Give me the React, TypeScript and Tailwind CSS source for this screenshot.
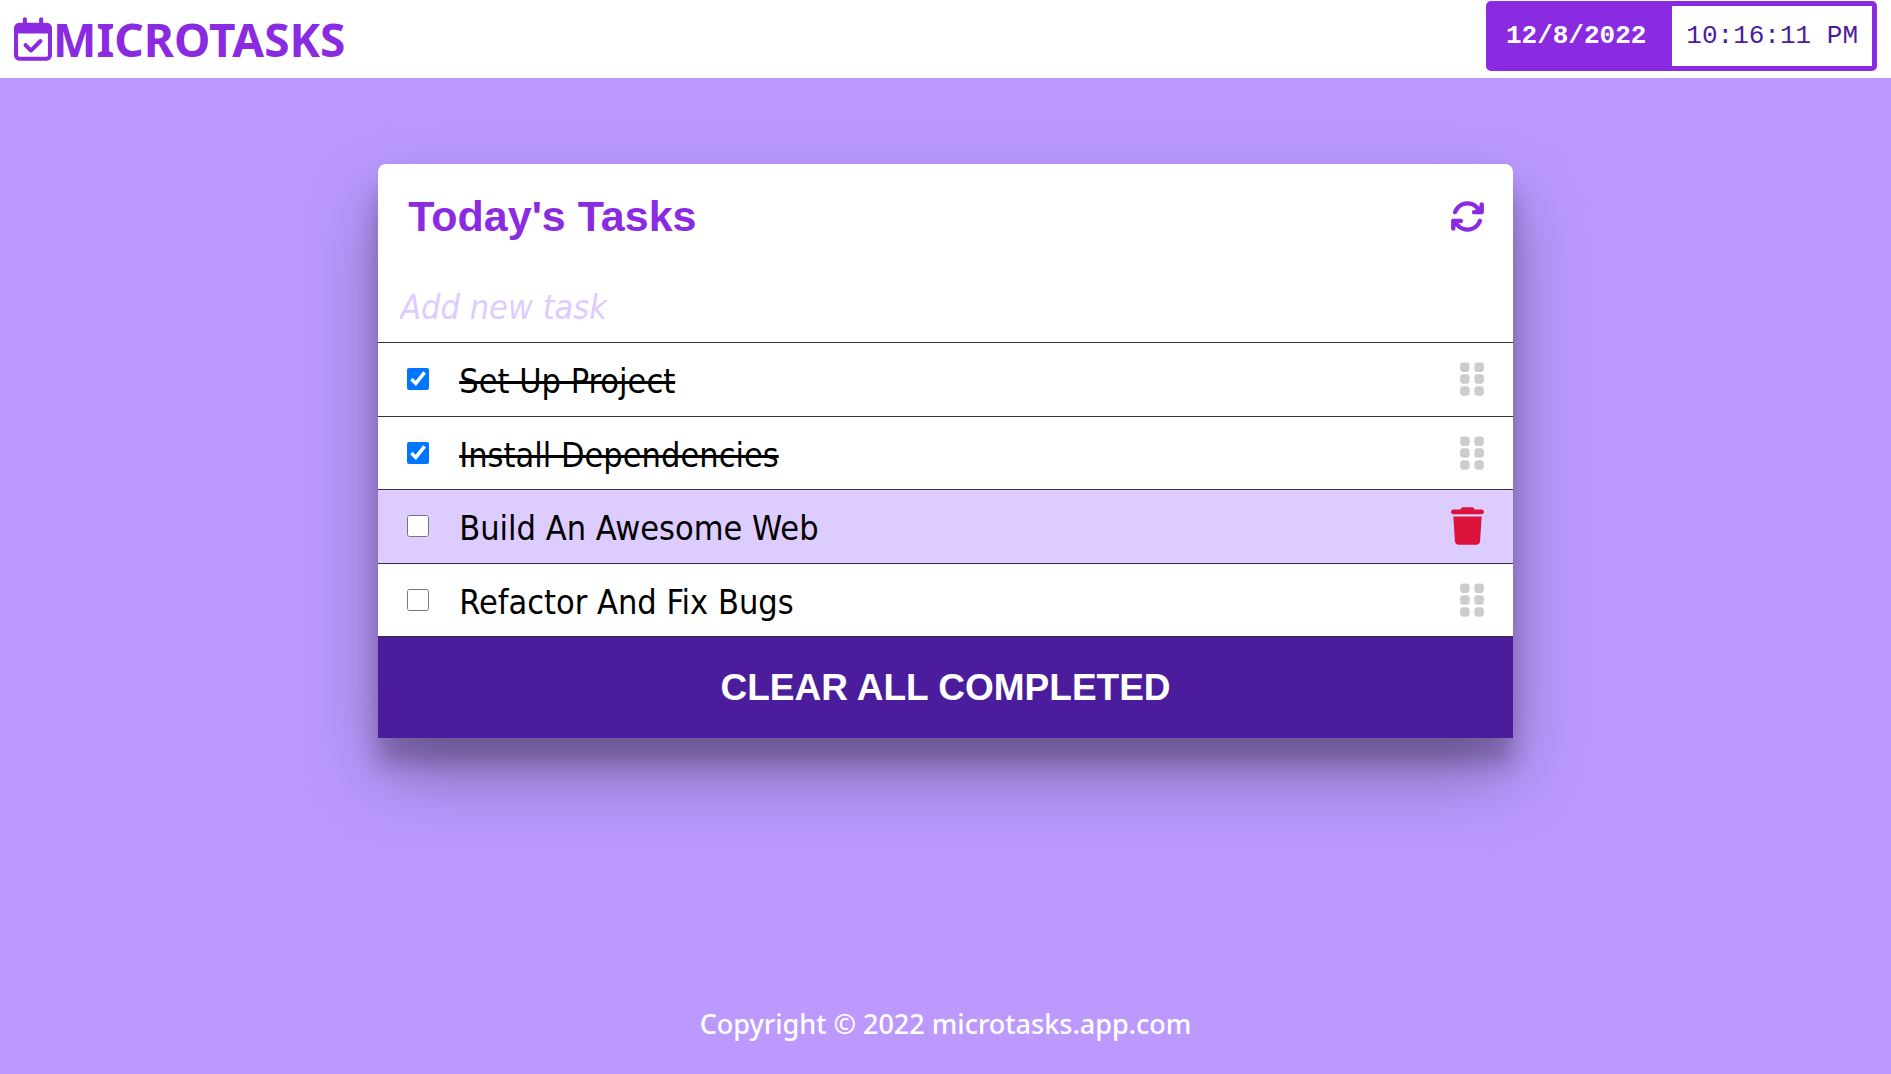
import React, { useState } from "react";
import {
  FaArrowsRotate,
  FaGripVertical,
  FaRegCalendarCheck,
  FaTrash,
} from "react-icons/fa6";

type Task = { id: number; title: string; done: boolean; selected?: boolean };

const initialTasks: Task[] = [
  { id: 1, title: "Set Up Project", done: true },
  { id: 2, title: "Install Dependencies", done: true },
  { id: 3, title: "Build An Awesome Web", done: false, selected: true },
  { id: 4, title: "Refactor And Fix Bugs", done: false },
];

function Header() {
  return (
    <header className="flex h-[78px] items-start justify-between bg-white px-[14px]">
      <div className="flex h-full items-center text-[#8a2be2]">
        <FaRegCalendarCheck className="h-[44px] w-[38px]" aria-hidden="true" />
        <h1 className="pl-px font-['Noto_Sans',sans-serif] text-[46px] leading-none font-bold">
          MICROTASKS
        </h1>
      </div>
      <div className="mt-px flex h-[70px] rounded-[5px] border-[5px] border-[#8a2be2] bg-[#8a2be2] font-['Liberation_Mono',monospace] text-[26px]">
        <span className="flex items-center pr-[26px] pl-[15px] font-bold text-white">
          12/8/2022
        </span>
        <time className="flex items-center bg-white px-[14px] text-[#4b1d9d]">
          10:16:11 PM
        </time>
      </div>
    </header>
  );
}

function TaskRow({ task, onToggle }: { task: Task; onToggle: () => void }) {
  const inputId = `task-${task.id}`;
  return (
    <li
      className={`flex items-center border-b border-[#333333] pr-[29px] pl-[29px] ${
        task.selected ? "bg-[#ddccff]" : "bg-white"
      }`}
    >
      <input
        id={inputId}
        type="checkbox"
        checked={task.done}
        onChange={onToggle}
        className="size-[22px] accent-[#0075ff]"
      />
      <label
        htmlFor={inputId}
        className={`ml-[30px] flex-1 pt-1 font-['DejaVu_Sans_Condensed',sans-serif] text-[34px] leading-none text-black ${
          task.done ? "line-through decoration-[3px]" : ""
        }`}
      >
        {task.title}
      </label>
      {task.selected ? (
        <button type="button" aria-label="Delete task" className="text-[#dc143c]">
          <FaTrash className="h-[38px] w-[33px]" />
        </button>
      ) : (
        <button type="button" aria-label="Move task" className="text-[#cccccc]">
          <FaGripVertical className="h-[38px] w-[24px]" />
        </button>
      )}
    </li>
  );
}

export default function App() {
  const [tasks, setTasks] = useState(initialTasks);
  const [draft, setDraft] = useState("");

  const toggle = (id: number) =>
    setTasks(tasks.map((t) => (t.id === id ? { ...t, done: !t.done } : t)));

  const addTask = (event: React.FormEvent) => {
    event.preventDefault();
    if (!draft.trim()) return;
    setTasks([...tasks, { id: Date.now(), title: draft, done: false }]);
    setDraft("");
  };

  return (
    <div className="flex min-h-screen flex-col bg-[#bb99ff] font-['Noto_Sans',sans-serif]">
      <Header />
      <main className="mx-auto mt-[86px] w-3/5 rounded-t-lg bg-white shadow-[0_36px_76px_rgba(0,0,0,0.3),0_26px_22px_rgba(0,0,0,0.22)]">
        <div className="flex h-[104px] items-center justify-between pr-[28px] pl-[30px] text-[#8a2be2]">
          <h2 className="font-['Liberation_Sans',sans-serif] text-[43px] leading-none font-bold">
            Today's Tasks
          </h2>
          <button type="button" aria-label="Refresh">
            <FaArrowsRotate className="size-[35px]" />
          </button>
        </div>
        <form onSubmit={addTask}>
          <input
            type="text"
            aria-label="Add new task"
            placeholder="Add new task"
            value={draft}
            onChange={(e) => setDraft(e.target.value)}
            className="block h-[75px] w-full border-b border-[#333333] px-[22px] pt-1 font-['DejaVu_Sans_Condensed',sans-serif] text-[34px] italic outline-none placeholder:text-[#ddccff]"
          />
        </form>
        <ul className="grid min-h-[294px] auto-rows-fr">
          {tasks.map((task) => (
            <TaskRow key={task.id} task={task} onToggle={() => toggle(task.id)} />
          ))}
        </ul>
        <button
          type="button"
          onClick={() => setTasks(tasks.filter((t) => !t.done))}
          className="flex h-[101px] w-full items-center justify-center bg-[#4b1d9d] font-['Liberation_Sans',sans-serif] text-[37px] font-bold text-white"
        >
          CLEAR ALL COMPLETED
        </button>
      </main>
      <footer className="mt-auto pb-[30px] text-center text-[27px] leading-10 font-medium text-white">
        Copyright © 2022 microtasks.app.com
      </footer>
    </div>
  );
}
